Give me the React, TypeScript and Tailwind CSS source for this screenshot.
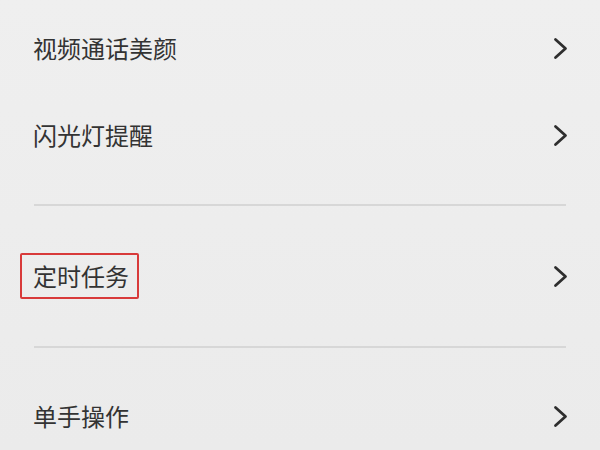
import React from 'react';

const Chevron: React.FC = () => (
  <svg width="15" height="23" viewBox="0 0 15 23" fill="none" className="shrink-0">
    <polyline
      points="2.5,2.5 12.5,11.5 2.5,20.5"
      stroke="#2e2e2e"
      strokeWidth="2.8"
      strokeLinecap="round"
      strokeLinejoin="round"
    />
  </svg>
);

interface RowProps {
  label: string;
  height: string;
  marked?: boolean;
}

const Row: React.FC<RowProps> = ({ label, height, marked }) => (
  <div className={`flex items-center justify-between pl-[33px] pr-[32px] ${height}`}>
    {marked ? (
      <span className="-ml-[13px] flex h-[46px] items-center border-2 border-[#d83a3a] rounded-[2px] pl-[11px] pr-[8px]">
        {label}
      </span>
    ) : (
      <span>{label}</span>
    )}
    <Chevron />
  </div>
);

const Divider: React.FC = () => (
  <div className="px-[34px]">
    <div className="h-[2px] bg-[#d7d7d7]" />
  </div>
);

export default function App() {
  return (
    <div
      className="w-[600px] h-[450px] overflow-hidden bg-gradient-to-b from-[#efefef] to-[#ebebeb] text-[#333333] text-[24px] leading-none"
      style={{ fontFamily: '"Noto Sans CJK SC", "Noto Sans", sans-serif' }}
    >
      <div className="pt-[5px]">
        <Row label="视频通话美颜" height="h-[86px]" />
        <Row label="闪光灯提醒" height="h-[88px]" />
        <div className="h-[25px]" />
        <Divider />
        <Row label="定时任务" height="h-[140px]" marked />
        <Divider />
        <Row label="单手操作" height="h-[136px]" />
      </div>
    </div>
  );
}
